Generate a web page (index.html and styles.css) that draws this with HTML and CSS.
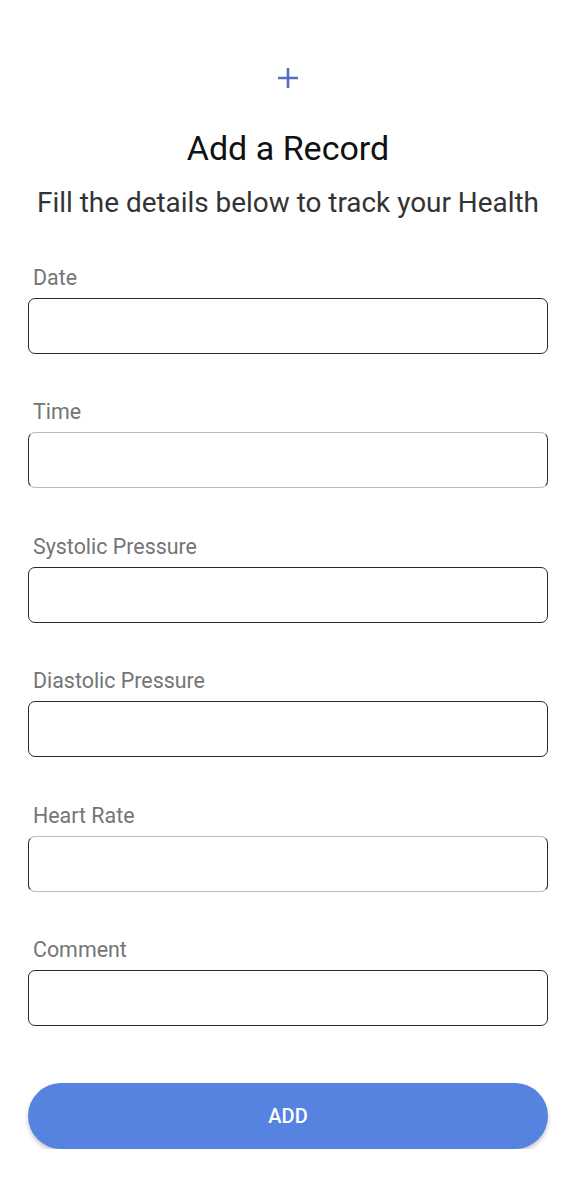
FILE: index.html
```html
<!DOCTYPE html>
<html>
<head>
<meta charset="utf-8">
<link rel="stylesheet" href="styles.css">
</head>
<body>
<main class="page">
  <div class="icon">
    <svg width="22" height="22" viewBox="0 0 22 22"><path d="M11 1v20M1 11h20" stroke="#4f6fc4" stroke-width="2.6" fill="none"/></svg>
  </div>
  <h1 class="title">Add a Record</h1>
  <p class="subtitle">Fill the details below to track your Health</p>
  <form class="form">
    <div class="field"><label class="label">Date</label><div class="box"></div></div>
    <div class="field"><label class="label">Time</label><div class="box soft"></div></div>
    <div class="field"><label class="label">Systolic Pressure</label><div class="box"></div></div>
    <div class="field"><label class="label">Diastolic Pressure</label><div class="box"></div></div>
    <div class="field"><label class="label">Heart Rate</label><div class="box soft"></div></div>
    <div class="field"><label class="label">Comment</label><div class="box"></div></div>
    <button type="button" class="btn">ADD</button>
  </form>
</main>
</body>
</html>
```
FILE: styles.css
```css
html, body { margin: 0; padding: 0; background: #fff; }
body { font-family: Roboto, "Noto Sans", sans-serif; }
.page { padding: 67px 28px 0; display: flex; flex-direction: column; align-items: stretch; }
.icon { display: flex; justify-content: center; height: 22px; }
.title { margin: 39px 0 0; font-size: 34px; line-height: 40px; font-weight: 400; text-align: center; color: #111; }
.subtitle { margin: 19px 0 0; font-size: 27.9px; line-height: 32px; font-weight: 400; text-align: center; color: #333; white-space: nowrap; }
.form { display: flex; flex-direction: column; margin-top: 47px; }
.field { display: flex; flex-direction: column; margin-bottom: 46.4px; }
.label { font-size: 21.4px; line-height: 24px; color: #757575; padding-left: 5px; margin-bottom: 8px; }
.box { height: 54px; border: 1px solid #2a2a2a; border-radius: 7px; }
.box.soft { border-top-color: #bdbdbd; border-bottom-color: #bdbdbd; }
.btn { margin-top: 11px; height: 66px; border: none; border-radius: 33px; background: #5783e0; color: #fff; font-family: Roboto, sans-serif; font-size: 20px; font-weight: 500; box-shadow: 0 3px 4px rgba(0,0,0,0.22); }
```
